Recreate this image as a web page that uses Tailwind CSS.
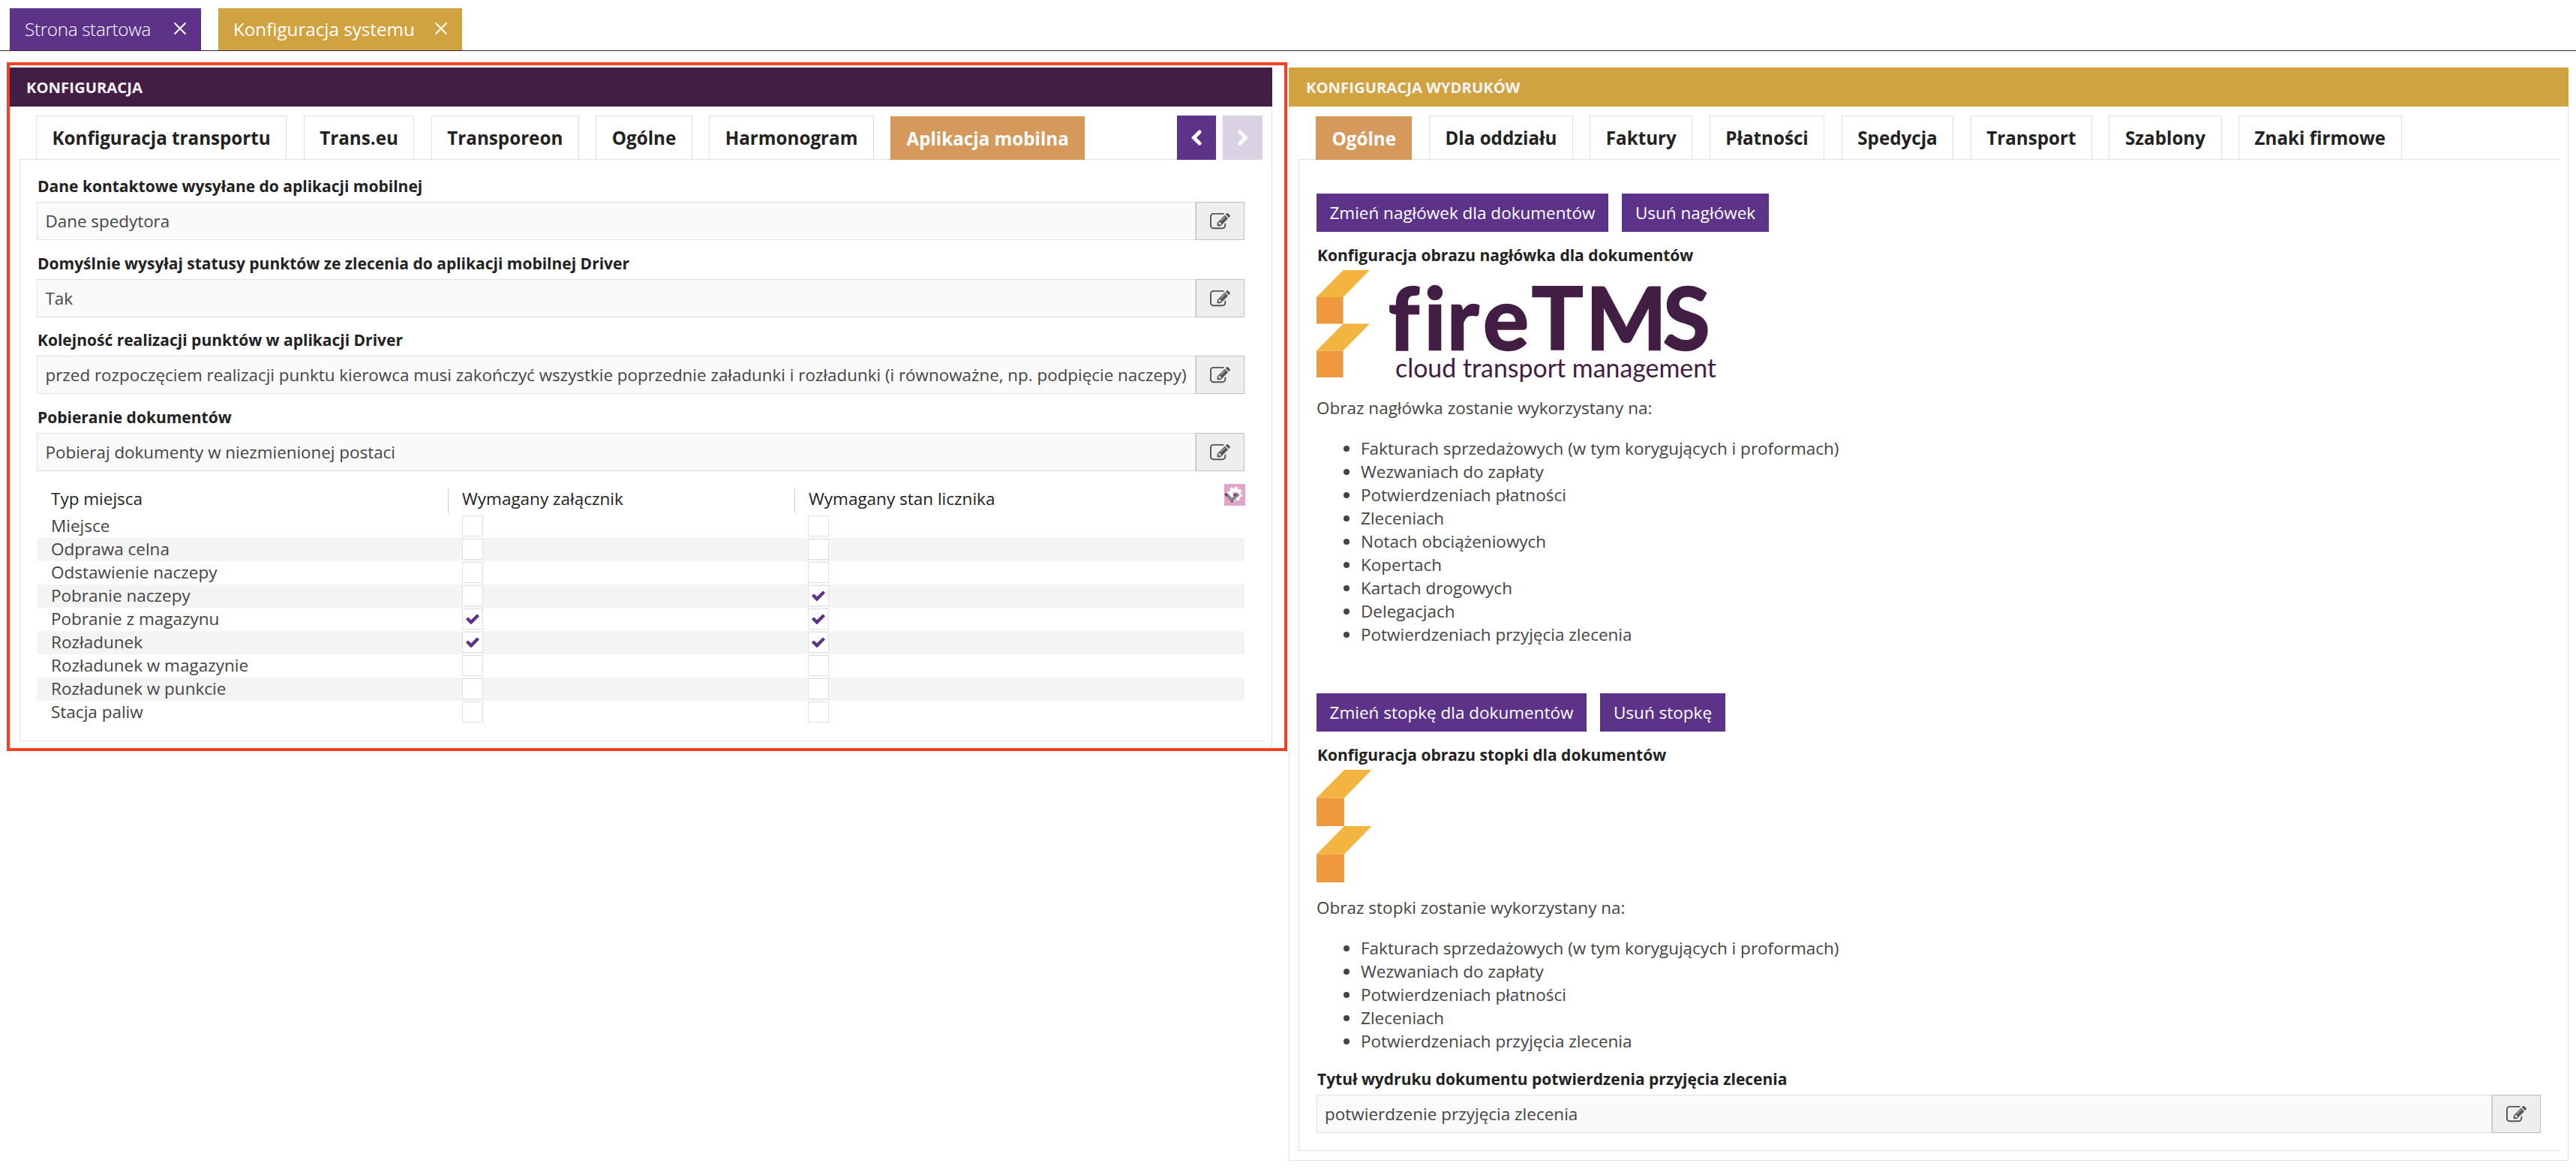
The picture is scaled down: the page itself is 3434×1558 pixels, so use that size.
<!DOCTYPE html>
<html lang="pl">
<head>
    <meta charset="UTF-8">
    <meta name="viewport" content="width=device-width, initial-scale=1.0">
    <title>fireTMS - Konfiguracja systemu</title>
    <script src="https://cdn.jsdelivr.net/npm/@tailwindcss/browser@4"></script>
</head>
<body class="relative bg-white font-['Open_Sans',sans-serif] text-[22.5px] leading-[31px] text-[#444] overflow-hidden">

<!-- Ikony -->
<svg class="hidden">
    <symbol id="icon-edit" viewBox="0 0 1792 1792">
        <path fill="currentColor" d="M888 1184l116-116-152-152-116 116v56h96v96h56zm440-720q-16-16-33 1l-350 350q-17 17-1 33t33-1l350-350q17-17 1-33zm80 594v190q0 119-84.5 203.5t-203.5 84.5h-832q-119 0-203.5-84.5t-84.5-203.5v-832q0-119 84.5-203.5t203.5-84.5h832q63 0 117 25 15 7 18 23 3 17-9 29l-49 49q-14 14-32 8-23-6-45-6h-832q-66 0-113 47t-47 113v832q0 66 47 113t113 47h832q66 0 113-47t47-113v-126q0-13 9-22l64-64q15-15 35-7t20 29zm-96-738l288 288-672 672h-288v-288zm444 132l-92 92-288-288 92-92q28-28 68-28t68 28l152 152q28 28 28 68t-28 68z"/>
    </symbol>
    <symbol id="icon-check" viewBox="0 0 1792 1792">
        <path fill="currentColor" d="M1671 566q0 40-28 68l-724 724-136 136q-28 28-68 28t-68-28l-136-136-362-362q-28-28-28-68t28-68l136-136q28-28 68-28t68 28l294 295 656-657q28-28 68-28t68 28l136 136q28 28 28 68z"/>
    </symbol>
    <symbol id="icon-close" viewBox="0 0 18 18">
        <path d="M1.5 1.5l15 15M16.5 1.5l-15 15" stroke="currentColor" stroke-width="2" fill="none"/>
    </symbol>
    <symbol id="icon-left" viewBox="0 0 14 21">
        <path d="M11 3L3.5 10.5L11 18" stroke="currentColor" stroke-width="5" stroke-linecap="round" stroke-linejoin="miter" fill="none"/>
    </symbol>
    <symbol id="icon-right" viewBox="0 0 14 21">
        <path d="M3 3L10.5 10.5L3 18" stroke="currentColor" stroke-width="5" stroke-linecap="round" stroke-linejoin="miter" fill="none"/>
    </symbol>
</svg>

<!-- Zakładki główne -->
<header class="flex items-end gap-[23px] h-[68px] pl-[13px] border-b border-[#3f1c42] text-[24.2px] text-white">
    <div class="flex items-center justify-between w-[255px] h-14 pl-5 pr-[19px] pb-0.5 bg-[#5c3388]">
        <span class="font-light tracking-[-0.3px]">Strona startowa</span>
        <svg class="w-[18px] h-[18px]"><use href="#icon-close"/></svg>
    </div>
    <div class="flex items-center justify-between w-[325px] h-14 pl-5 pr-[19px] pb-0.5 bg-[#d1a340]">
        <span>Konfiguracja systemu</span>
        <svg class="w-[18px] h-[18px]"><use href="#icon-close"/></svg>
    </div>
</header>

<main class="flex items-start gap-[22px] pt-[22px] pl-[13px]">

    <!-- Konfiguracja -->
    <section class="w-[1683px]">
        <h2 class="flex items-center h-[52px] pl-[22px] bg-[#431e44] text-[20.3px] font-bold text-[#f5f5f5]">KONFIGURACJA</h2>
        <div class="h-[858px] pl-3 pr-3 border-x border-[#e0dede]">
            <nav class="flex items-end gap-[22.5px] h-[71px] pl-[22px] border-b border-[#e0dede] text-[24.2px] font-bold text-[#222] whitespace-nowrap">
                <a class="flex items-center h-[58px] px-[20.5px] border border-b-0 border-[#e0dede]">Konfiguracja transportu</a>
                <a class="flex items-center h-[58px] px-[20.5px] border border-b-0 border-[#e0dede]">Trans.eu</a>
                <a class="flex items-center h-[58px] px-[20.5px] border border-b-0 border-[#e0dede]">Transporeon</a>
                <a class="flex items-center h-[58px] px-[20.5px] border border-b-0 border-[#e0dede]">Ogólne</a>
                <a class="flex items-center h-[58px] px-[20.5px] border border-b-0 border-[#e0dede]">Harmonogram</a>
                <a class="flex items-center h-[58px] -mb-px px-[21px] bg-[#d5995b] text-white">Aplikacja mobilna</a>
                <div class="flex gap-[9px] ml-auto -mb-px bg-[#fafafa]">
                    <button class="flex items-center justify-center w-[52px] h-[59px] bg-[#5c3388] text-white">
                        <svg class="w-[14px] h-[21px]"><use href="#icon-left"/></svg>
                    </button>
                    <button class="flex items-center justify-center w-[53px] h-[59px] bg-[#d9d2e3] text-[#fafafa]">
                        <svg class="w-[14px] h-[21px]"><use href="#icon-right"/></svg>
                    </button>
                </div>
            </nav>

            <div class="h-[775px] pl-[22px] pr-6 pt-[23px] border-l border-b border-[#e0dede]">
                <div id="fields" class="flex flex-col gap-[18.5px]"></div>

                <div class="mt-[23px]">
                    <div class="flex h-[33px] text-[#222]">
                        <div class="flex items-center w-[548px] pl-[19px] pb-[5px]">Typ miejsca</div>
                        <div class="flex items-center w-[462px] pl-[18px] pb-[5px] border-l border-[#ccc]">Wymagany załącznik</div>
                        <div class="flex items-center grow pl-[18px] pb-[5px] border-l border-[#ccc]">Wymagany stan licznika</div>
                        <svg class="w-7 h-[29px] -mt-[6px] -mr-px" viewBox="0 0 28 29">
                            <rect width="28" height="29" fill="#e0a5c8"/>
                            <circle cx="14" cy="13.5" r="5.5" fill="none" stroke="#fff" stroke-width="5"/>
                            <circle cx="14" cy="13.5" r="8.5" fill="none" stroke="#fff" stroke-width="3" stroke-dasharray="3.6 3.08"/>
                            <path d="M2.5 13.5L10.5 21.5L19 13" fill="none" stroke="#8b8489" stroke-width="4.5"/>
                            <path d="M1 13l3 3M9.5 23.500h2M13 16l3-3" fill="none" stroke="#7d3a66" stroke-width="2.500"/>
                        </svg>
                    </div>
                    <div id="places" class="pt-0.5"></div>
                </div>
            </div>
        </div>
    </section>

    <!-- Konfiguracja wydruków -->
    <section class="w-[1706px]">
        <h2 class="flex items-center h-[52px] pl-[23px] bg-[#d1a340] text-[20.3px] font-bold text-[#f5f5f5]">KONFIGURACJA WYDRUKÓW</h2>
        <div class="h-[1405px] pl-3 pr-3 border border-t-0 border-[#e0dede]">
            <nav class="flex items-end gap-[22.5px] h-[71px] pl-[23px] border-b border-[#e0dede] text-[24.2px] font-bold text-[#222] whitespace-nowrap">
                <a class="flex items-center h-[58px] -mb-px px-[21.5px] bg-[#d5995b] text-white">Ogólne</a>
                <a class="flex items-center h-[58px] px-[20.5px] border border-b-0 border-[#e0dede]">Dla oddziału</a>
                <a class="flex items-center h-[58px] px-[20.5px] border border-b-0 border-[#e0dede]">Faktury</a>
                <a class="flex items-center h-[58px] px-[20.5px] border border-b-0 border-[#e0dede]">Płatności</a>
                <a class="flex items-center h-[58px] px-[20.5px] border border-b-0 border-[#e0dede]">Spedycja</a>
                <a class="flex items-center h-[58px] px-[20.5px] border border-b-0 border-[#e0dede]">Transport</a>
                <a class="flex items-center h-[58px] px-[20.5px] border border-b-0 border-[#e0dede]">Szablony</a>
                <a class="flex items-center h-[58px] px-[20.5px] border border-b-0 border-[#e0dede]">Znaki firmowe</a>
            </nav>

            <div class="h-[1321px] pl-[23px] pr-6 pt-[45px] border-l border-b border-[#e0dede]">
                <!-- Nagłówek -->
                <div class="flex gap-[18px] text-white">
                    <button class="w-[389px] h-[51px] bg-[#5c3388]">Zmień nagłówek dla dokumentów</button>
                    <button class="w-[196px] h-[51px] bg-[#5c3388]">Usuń nagłówek</button>
                </div>
                <h3 class="mt-[19px] pl-px text-[21px] leading-6 font-bold text-[#222]">Konfiguracja obrazu nagłówka dla dokumentów</h3>
                <svg class="block w-[540px] h-[156px] mt-2" viewBox="0 0 540 156">
                    <path fill="#f4b440" d="M35.500 0H71L35.500 36H0zM35.500 71.500H71L35.500 107.500H0z"/>
                    <path fill="#f0983d" d="M0 36h35.500v35.500H0zM0 107.500h35.500V143H0z"/>
                    <text x="96 143.500 174 222 287 359 462" y="106" font-family="Lato, sans-serif" font-weight="700" font-size="114" fill="#431e44" stroke="#431e44" stroke-width="2.500">fireTMS</text>
                    <text x="105" y="143" textLength="428" lengthAdjust="spacingAndGlyphs" font-family="Lato, sans-serif" font-size="34" fill="#431e44">cloud transport management</text>
                </svg>
                <p class="mt-[12px]">Obraz nagłówka zostanie wykorzystany na:</p>
                <ul class="mt-[23px] pl-[59px] list-disc">
                    <li>Fakturach sprzedażowych (w tym korygujących i proformach)</li>
                    <li>Wezwaniach do zapłaty</li>
                    <li>Potwierdzeniach płatności</li>
                    <li>Zleceniach</li>
                    <li>Notach obciążeniowych</li>
                    <li>Kopertach</li>
                    <li>Kartach drogowych</li>
                    <li>Delegacjach</li>
                    <li>Potwierdzeniach przyjęcia zlecenia</li>
                </ul>

                <!-- Stopka -->
                <div class="flex gap-[18px] mt-[63px] text-white">
                    <button class="w-[360px] h-[51px] bg-[#5c3388]">Zmień stopkę dla dokumentów</button>
                    <button class="w-[167px] h-[51px] bg-[#5c3388]">Usuń stopkę</button>
                </div>
                <h3 class="mt-[19px] pl-px text-[21px] leading-6 font-bold text-[#222]">Konfiguracja obrazu stopki dla dokumentów</h3>
                <svg class="block w-[74px] h-[150px] mt-2" viewBox="0 0 74 150">
                    <path fill="#f4b440" d="M37 0H73.500L37 37.500H0zM37 75H73.500L37 112.500H0z"/>
                    <path fill="#f0983d" d="M0 37.500h37V75H0zM0 112.500h37V150H0z"/>
                </svg>
                <p class="mt-[18px]">Obraz stopki zostanie wykorzystany na:</p>
                <ul class="mt-[23px] pl-[59px] list-disc">
                    <li>Fakturach sprzedażowych (w tym korygujących i proformach)</li>
                    <li>Wezwaniach do zapłaty</li>
                    <li>Potwierdzeniach płatności</li>
                    <li>Zleceniach</li>
                    <li>Potwierdzeniach przyjęcia zlecenia</li>
                </ul>

                <div class="mt-[23px]">
                    <h3 class="pl-px text-[21px] leading-6 font-bold text-[#222]">Tytuł wydruku dokumentu potwierdzenia przyjęcia zlecenia</h3>
                    <div class="flex h-[51px] mt-[9px]">
                        <div class="flex items-center grow pl-2.5 border border-[#dfdfdf] bg-[#fafafa]">potwierdzenie przyjęcia zlecenia</div>
                        <button class="flex items-center justify-center w-[65px] border border-[#bfbfbf] bg-[#eee] text-[#555]">
                            <svg class="w-[27px] h-[27px] mt-0.5"><use href="#icon-edit"/></svg>
                        </button>
                    </div>
                </div>
            </div>
        </div>
    </section>
</main>

<!-- Ramka wyróżniająca lewy panel -->
<div class="absolute left-[9px] top-[83px] w-[1707px] h-[918px] border-4 border-[#ee4227]"></div>

<script>
    const fields = [
        ["Dane kontaktowe wysyłane do aplikacji mobilnej", "Dane spedytora"],
        ["Domyślnie wysyłaj statusy punktów ze zlecenia do aplikacji mobilnej Driver", "Tak"],
        ["Kolejność realizacji punktów w aplikacji Driver", "przed rozpoczęciem realizacji punktu kierowca musi zakończyć wszystkie poprzednie załadunki i rozładunki (i równoważne, np. podpięcie naczepy)"],
        ["Pobieranie dokumentów", "Pobieraj dokumenty w niezmienionej postaci"]
    ];

    // nazwa, wymagany załącznik, wymagany stan licznika
    const places = [
        ["Miejsce", false, false],
        ["Odprawa celna", false, false],
        ["Odstawienie naczepy", false, false],
        ["Pobranie naczepy", false, true],
        ["Pobranie z magazynu", true, true],
        ["Rozładunek", true, true],
        ["Rozładunek w magazynie", false, false],
        ["Rozładunek w punkcie", false, false],
        ["Stacja paliw", false, false]
    ];

    document.getElementById("fields").innerHTML = fields.map(([label, value]) => `
        <div>
            <h3 class="pl-px text-[21px] leading-6 font-bold text-[#222]">${label}</h3>
            <div class="flex h-[51px] mt-[9px]">
                <div class="flex items-center grow pl-[10.5px] border border-[#dfdfdf] bg-[#fafafa] text-[22.4px] whitespace-nowrap">${value}</div>
                <button class="flex items-center justify-center w-[65px] shrink-0 border border-[#bfbfbf] bg-[#eee] text-[#555]">
                    <svg class="w-[27px] h-[27px] mt-0.5"><use href="#icon-edit"/></svg>
                </button>
            </div>
        </div>`).join("");

    const checkbox = (checked) => `
        <span class="flex items-center justify-center w-7 h-7 border border-[#e0dede] bg-white text-[#5c3388]">
            ${checked ? '<svg class="w-5 h-5"><use href="#icon-check"/></svg>' : ''}
        </span>`;

    document.getElementById("places").innerHTML = places.map(([name, file, meter]) => `
        <div class="flex items-center h-[31px] even:bg-[#f4f4f4]">
            <div class="w-[567px] pl-[19px] pb-0.5">${name}</div>
            <div class="w-[461px]">${checkbox(file)}</div>
            <div>${checkbox(meter)}</div>
        </div>`).join("");
</script>
</body>
</html>
